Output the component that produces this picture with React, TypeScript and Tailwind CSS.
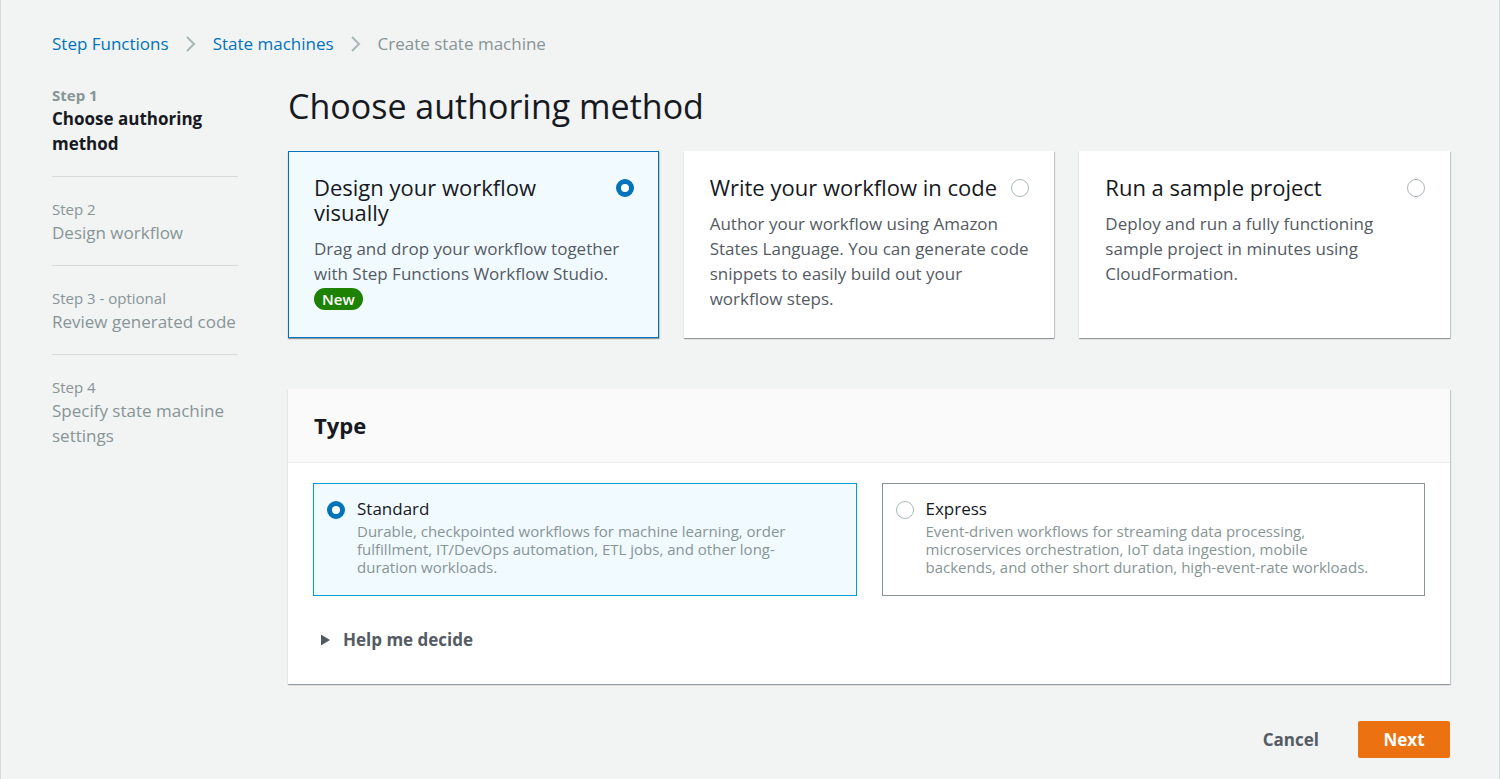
import React from "react";

const font = { fontFamily: '"Open Sans", "Noto Sans", Arial, sans-serif' };

function Radio({ checked }: { checked: boolean }) {
  return checked ? (
    <span className="block w-[18px] h-[18px] rounded-full border-[5px] border-[#0073bb] bg-white shrink-0" />
  ) : (
    <span className="block w-[18px] h-[18px] rounded-full border-[1.5px] border-[#aab7b8] bg-white shrink-0" />
  );
}

function Chevron() {
  return (
    <svg width="12" height="18" viewBox="0 0 12 18" className="mx-[16px]">
      <path d="M2 2 L9 9 L2 16" fill="none" stroke="#aab7b8" strokeWidth="2" />
    </svg>
  );
}

function Step({ label, title, active, first, last }: { label: string; title: string; active?: boolean; first?: boolean; last?: boolean }) {
  return (
    <div className={`${first ? "pt-0" : "pt-[21px]"} pb-[20px] ${last ? "" : "border-b border-[#d5dbdb]"}`}>
      <div className={`text-[15px] leading-[22px] text-[#879596] ${active ? "font-bold" : ""}`}>{label}</div>
      <div className={`text-[17px] leading-[25px] ${active ? "font-bold text-[#16191f]" : "text-[#879596]"}`}>{title}</div>
    </div>
  );
}

function MethodCard({ title, desc, checked, badge }: { title: string; desc: string; checked?: boolean; badge?: boolean }) {
  return (
    <div
      className={`flex-1 h-[187px] pl-[25px] pr-[24px] pt-[23px] shadow-[0_1px_1px_0_rgba(0,28,36,0.3),1px_1px_1px_0_rgba(0,28,36,0.15)] ${
        checked ? "bg-[#f1faff] border border-[#0073bb]" : "bg-white border border-transparent"
      }`}
    >
      <div className="flex items-start justify-between gap-[12px]">
        <div className="text-[22px] leading-[25px] text-[#16191f]">{title}</div>
        <div className="flex mt-[4px]">
          <Radio checked={!!checked} />
        </div>
      </div>
      <div className="mt-[11px] text-[17px] leading-[25px] text-[#545b64]">{desc}</div>
      {badge && (
        <span className="inline-block mt-[2px] bg-[#1d8102] text-white text-[15px] font-semibold leading-[22px] px-[8px] rounded-full">
          New
        </span>
      )}
    </div>
  );
}

function TypeTile({ title, desc, checked }: { title: string; desc: string; checked?: boolean }) {
  return (
    <div
      className={`flex-1 h-[113px] flex items-start gap-[12px] pl-[13px] pt-[14px] border ${
        checked ? "bg-[#f1faff] border-[#00a1c9]" : "bg-white border-[#879596]"
      }`}
    >
      <div className="flex mt-[3px]">
        <Radio checked={!!checked} />
      </div>
      <div>
        <div className="text-[17px] leading-[22px] text-[#16191f]">{title}</div>
        <div className="text-[15px] leading-[18px] text-[#879596] mt-[2px] max-w-[445px]">{desc}</div>
      </div>
    </div>
  );
}

export default function App() {
  return (
    <div style={font} className="w-[1500px] h-[779px] bg-[#f2f3f3] border-x border-[#d5dbdb] overflow-hidden">
      <div className="pl-[51px] pr-[49px] pt-[32px]">
        {/* Breadcrumb */}
        <div className="flex items-center text-[17px] leading-[24px]">
          <span className="text-[#0073bb]">Step Functions</span>
          <Chevron />
          <span className="text-[#0073bb]">State machines</span>
          <Chevron />
          <span className="text-[#879596]">Create state machine</span>
        </div>

        <div className="flex mt-[28px]">
          {/* Left nav */}
          <div className="w-[186px] shrink-0">
            <Step label="Step 1" title="Choose authoring method" active first />
            <Step label="Step 2" title="Design workflow" />
            <Step label="Step 3 - optional" title="Review generated code" />
            <Step label="Step 4" title="Specify state machine settings" last />
          </div>

          {/* Main */}
          <div className="flex-1 ml-[50px]">
            <h1 className="text-[34px] leading-[40px] text-[#16191f] mt-[2px]">Choose authoring method</h1>

            <div className="flex gap-[25px] mt-[25px]">
              <MethodCard
                title="Design your workflow visually"
                desc="Drag and drop your workflow together with Step Functions Workflow Studio."
                checked
                badge
              />
              <MethodCard
                title="Write your workflow in code"
                desc="Author your workflow using Amazon States Language. You can generate code snippets to easily build out your workflow steps."
              />
              <MethodCard
                title="Run a sample project"
                desc="Deploy and run a fully functioning sample project in minutes using CloudFormation."
              />
            </div>

            {/* Type panel */}
            <div className="mt-[51px] bg-white shadow-[0_1px_1px_0_rgba(0,28,36,0.3),1px_1px_1px_0_rgba(0,28,36,0.15)]">
              <div className="h-[74px] bg-[#fafafa] border-b border-[#eaeded] flex items-center px-[26px]">
                <h2 className="text-[22px] font-bold text-[#16191f]">Type</h2>
              </div>
              <div className="px-[25px] pt-[20px] pb-[32px]">
                <div className="flex gap-[25px]">
                  <TypeTile
                    title="Standard"
                    desc="Durable, checkpointed workflows for machine learning, order fulfillment, IT/DevOps automation, ETL jobs, and other long-duration workloads."
                    checked
                  />
                  <TypeTile
                    title="Express"
                    desc="Event-driven workflows for streaming data processing, microservices orchestration, IoT data ingestion, mobile backends, and other short duration, high-event-rate workloads."
                  />
                </div>
                <div className="flex items-center mt-[32px] text-[17px] font-bold text-[#545b64] leading-[24px]">
                  <svg width="11" height="14" viewBox="0 0 11 14" className="ml-[7px] mr-[12px]">
                    <path d="M1 1.5 L10 7 L1 12.5 Z" fill="#545b64" />
                  </svg>
                  Help me decide
                </div>
              </div>
            </div>

            {/* Actions */}
            <div className="flex justify-end items-center mt-[37px] gap-[19px]">
              <button className="px-[20px] h-[37px] text-[17px] font-bold text-[#545b64]">Cancel</button>
              <button className="w-[92px] h-[37px] rounded-[2px] bg-[#ec7211] text-white text-[17px] font-bold">Next</button>
            </div>
          </div>
        </div>
      </div>
    </div>
  );
}
